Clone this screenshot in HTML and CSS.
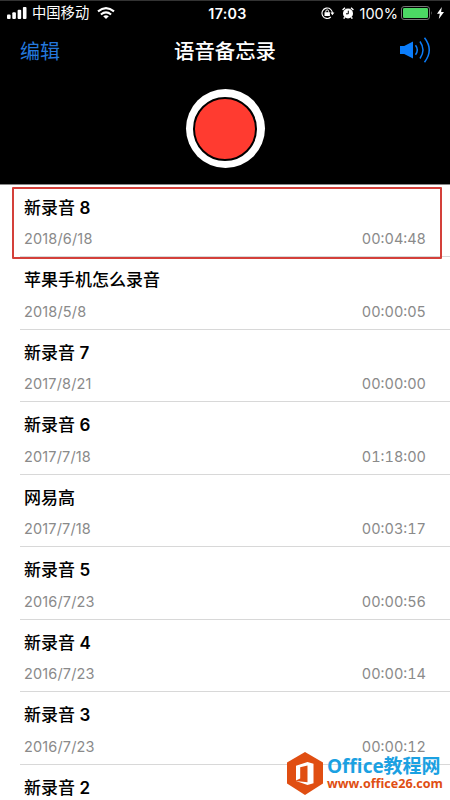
FILE: index.html
```html
<!DOCTYPE html>
<html lang="zh-CN">
<head>
<meta charset="utf-8">
<title>语音备忘录</title>
<link rel="stylesheet" href="styles.css">
</head>
<body>
<div class="screen">
  <header class="top">
    <div class="status">
      <div class="status-left">
        <svg class="signal" width="20" height="12" viewBox="0 0 20 12" fill="#fff"><rect x="0" y="7.5" width="3.6" height="4.5" rx="1"/><rect x="5.3" y="5.3" width="3.6" height="6.7" rx="1"/><rect x="10.6" y="2.8" width="3.6" height="9.2" rx="1"/><rect x="15.9" y="0" width="3.6" height="12" rx="1"/></svg>
        <span class="carrier">中国移动</span>
        <svg class="wifi" width="18" height="12" viewBox="0 0 18 12" fill="none" stroke="#fff" stroke-width="2.1"><path d="M1 4.4Q9-2.2 17 4.4"/><path d="M3.9 7.5Q9 3.4 14.1 7.5"/><path d="M9 12L6.2 9.2Q9 7.2 11.8 9.2Z" fill="#fff" stroke="none"/></svg>
      </div>
      <span class="clock">17:03</span>
      <div class="status-right">
        <svg class="lock" width="14" height="12" viewBox="0 0 14 12" fill="none" stroke="#fff"><path d="M9.8 10A5.2 5.2 0 1 1 11.4 6.6" stroke-width="1.1"/><path d="M9.4 5.4h4l-2 2.8z" fill="#fff" stroke="none"/><rect x="3.5" y="5.2" width="5.4" height="3.8" fill="#fff" stroke="none"/><path d="M4.8 5.4V4.3a1.4 1.4 0 0 1 2.8 0v1.1"/></svg>
        <svg class="alarm" width="12" height="12" viewBox="0 0 12 12"><circle cx="6" cy="6.5" r="5" fill="#fff"/><path d="M.6 3L3 .7M11.4 3L9 .7M2.7 10.3l-1 1.3M9.3 10.3l1 1.3" stroke="#fff" stroke-width="1.5"/><path d="M6.3 3.7v3.1H4" fill="none" stroke="#000" stroke-width="1"/></svg>
        <span class="percent">100%</span>
        <svg class="battery" width="32" height="14" viewBox="0 0 32 14"><rect x=".5" y=".5" width="28" height="13" rx="2.6" fill="none" stroke="#777"/><rect x="2" y="2" width="25" height="10" rx="1.3" fill="#4cd964"/><path d="M30 5q1.5 2 0 4z" fill="#777"/></svg>
        <svg class="bolt" width="7" height="12" viewBox="0 0 7 12"><path d="M4.8 0L0 6.7h2.8L1.8 12 7 5H4.1z" fill="#fff"/></svg>
      </div>
    </div>
    <nav class="nav">
      <span class="edit">编辑</span>
      <h1 class="title">语音备忘录</h1>
      <svg class="speaker" width="32" height="26" viewBox="0 0 32 26" fill="none" stroke="#0b7dfa" stroke-width="1.5"><path d="M0 9h4.2L13 4.4v17.2L4.2 17H0z" fill="#0b7dfa" stroke="none"/><path d="M15.5 8.3q3.6 4.7 0 9.4M20 4.5q6 8.5 0 17M24.5 .8q9.5 12.2 0 24.4"/></svg>
    </nav>
    <div class="record"><div class="record-dot"></div></div>
  </header>
  <main class="list">
    <section class="row"><h2>新录音 <b>8</b></h2><p><span>2018/6/18</span><time>00:04:48</time></p></section>
    <section class="row"><h2>苹果手机怎么录音</h2><p><span>2018/5/8</span><time>00:00:05</time></p></section>
    <section class="row"><h2>新录音 <b>7</b></h2><p><span>2017/8/21</span><time>00:00:00</time></p></section>
    <section class="row"><h2>新录音 <b>6</b></h2><p><span>2017/7/18</span><time>01:18:00</time></p></section>
    <section class="row"><h2>网易高</h2><p><span>2017/7/18</span><time>00:03:17</time></p></section>
    <section class="row"><h2>新录音 <b>5</b></h2><p><span>2016/7/23</span><time>00:00:56</time></p></section>
    <section class="row"><h2>新录音 <b>4</b></h2><p><span>2016/7/23</span><time>00:00:14</time></p></section>
    <section class="row"><h2>新录音 <b>3</b></h2><p><span>2016/7/23</span><time>00:00:12</time></p></section>
    <section class="row"><h2>新录音 <b>2</b></h2></section>
  </main>
  <div class="highlight"></div>
  <div class="watermark">
    <svg width="36" height="43" viewBox="0 0 36 43"><path d="M18 0l18 10.5v21L18 43 0 31.5v-21z" fill="#e04e12"/><path d="M9 13.8L20.5 10l6 1.7v19.6l-6 1.7L9 29l11.5 1.3V13.6l-7.3 1.7v11.3L9 28.6z" fill="#fff"/></svg>
    <div class="brand"><span class="brand-name">Office教程网</span><span class="brand-url">www.office26.com</span></div>
  </div>
</div>
</body>
</html>
```
FILE: styles.css
```css
* { box-sizing: border-box; margin: 0; padding: 0; }
body { font-family: Inter, "Noto Sans CJK SC", sans-serif; background: #fff; }
svg { display: block; flex: none; }
.screen { position: relative; width: 450px; height: 800px; overflow: hidden; }
.top { height: 185px; background: #000; border-top: 1px solid #333; border-bottom: 1px solid #888; color: #fff; }
.status { display: grid; grid-template-columns: 1fr auto 1fr; align-items: center; height: 24px; padding: 0 6px 0 7px; }
.status-left, .status-right { display: flex; align-items: center; }
.status-right { justify-content: flex-end; }
.carrier { margin: 0 8px 0 5px; font-size: 14.3px; line-height: 20px; }
.clock { position: relative; left: 2px; font-size: 14.3px; font-weight: 600; letter-spacing: .3px; }
.alarm { margin-left: 7px; }
.percent { margin: 0 3px 0 6px; font-size: 14.5px; }
.bolt { margin-left: 4px; }
.nav { display: grid; grid-template-columns: 1fr auto 1fr; align-items: center; height: 50px; padding: 0 18px 0 20px; }
.edit { color: #2478dc; font-size: 20px; }
.title { margin-right: 2px; font-size: 20.4px; font-weight: 500; }
.speaker { justify-self: end; }
.record { width: 79px; height: 79px; margin: 14px auto 0; padding: 7.5px; border-radius: 50%; background: #fff; }
.record-dot { width: 64px; height: 64px; border: 2px solid #000; border-radius: 50%; background: #ff3b30; }
.list { margin-top: -.4px; padding-left: 20px; }
.row { height: 72.5px; padding: 11px 24px 0 4px; border-bottom: 1px solid #d8d8d8; }
.row h2 { font-size: 17px; line-height: 25px; font-weight: 500; color: #000; }
.row b { font-weight: 600; }
.row p { display: flex; justify-content: space-between; margin-top: 8.8px; font-size: 14.5px; line-height: 20px; letter-spacing: .15px; color: #8a8a8a; }
.row time { font-variant-numeric: tabular-nums; letter-spacing: 0; }
.highlight { position: absolute; left: 12px; top: 187px; width: 430px; height: 72px; border: 2px solid #d4403a; border-radius: 1px; }
.watermark { position: absolute; left: 287px; top: 752px; display: flex; }
.brand { display: flex; flex-direction: column; margin: 4px 0 0 4px; font-family: "Open Sans", "Noto Sans CJK SC", sans-serif; font-weight: 700; white-space: nowrap; }
.brand-name { font-size: 19px; line-height: 20px; color: #1ba1e2; }
.brand-url { font-size: 12.6px; line-height: 15px; color: #e04e12; }
```
